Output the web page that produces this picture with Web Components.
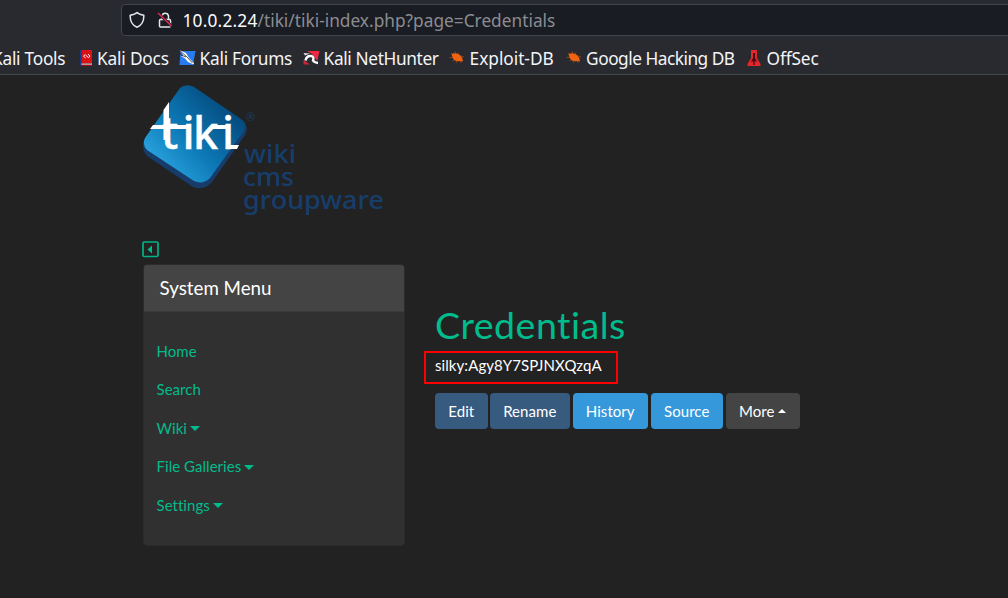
<!DOCTYPE html>
<html lang="en"><head><meta charset="utf-8"><title>Credentials</title>
<style>html,body{margin:0;height:100%;background:#222;overflow:hidden}</style></head><body>
<browser-view></browser-view>
<script>
const define=(name,html)=>customElements.define(name,class extends HTMLElement{
  constructor(){super();this.attachShadow({mode:'open'}).innerHTML=html;}
});

define('address-bar',`<style>
:host{display:flex;align-items:center;box-sizing:border-box;height:32px;margin:4px -10px 0 121px;padding-left:7px;background:#1a1c23;border:1px solid #43454b;border-radius:4px;color:#8b8c91;font:17.3px "Noto Sans",sans-serif;white-space:nowrap}
b{font-weight:400;color:#fbfbfe;letter-spacing:.2px}svg{flex:none;margin-right:12px}.lock{margin-right:9.500px}
span{display:block;line-height:30px;padding-top:1px}
</style>
<svg width="16" height="18" viewBox="0 0 16 18" fill="none" stroke="#e6e6ea" stroke-width="1.5" stroke-linejoin="round"><path d="M8 1.5 C6.5 3 4 3.7 1.2 4.2 C.9 10 3.4 14.2 8 16.3 C12.6 14.2 15.1 10 14.8 4.2 C12 3.7 9.500 3 8 1.5Z"/></svg>
<svg class="lock" width="16" height="18" viewBox="0 0 16 18" fill="none" stroke="#e6e6ea" stroke-width="1.5"><rect x="2.5" y="8.500" width="11" height="7.500" rx="1"/><path d="M5 8.500V5A3.300 3.300 0 0 1 11.500 5V8.500"/><path d="M1 2L14.500 15" stroke="#1a1c23" stroke-width="3"/><path d="M1 2L14.500 15" stroke="#e22850" stroke-width="1.500"/></svg>
<span><b>10.0.2.24</b>/tiki/tiki-index.php?page=Credentials</span>`);

define('bookmark-link',`<style>
:host{display:flex;flex:none;align-items:center;height:24px;color:#f4f4f7;font:17.3px/24px "Noto Sans",sans-serif;white-space:nowrap}
::slotted(svg){flex:none;margin:0 3.600px 1px 0}
</style><slot name="icon"></slot><slot></slot>`);

const bug=`<svg slot="icon" width="18" height="18" viewBox="0 0 18 18"><path d="M3 4L5 6M7 2.500L8 6M1.500 8.500H5M10 3.500L10.500 6M13 7L16 8M4.500 12L7 10.500M8 14L9 11.500M13 14L12 11" fill="none" stroke="#8a4020" stroke-width="1"/><path d="M3.500 5Q8 3 12 6Q14.500 8 15 12.500L12 12Q7 13 4.800 9Z" fill="#ef6410"/></svg>`;
define('bookmark-bar',`<style>
:host{display:flex;margin-top:10.500px;height:24px}
.tools{margin-left:-8px;width:85.500px;letter-spacing:-.25px}
.docs{width:100.500px;letter-spacing:-.2px}
.forums{width:124px;letter-spacing:-.27px}
.hunter{width:146px;letter-spacing:-.37px}
.exploit{width:116.500px;letter-spacing:-.03px}
.hacking{width:180.500px;letter-spacing:-.5px}
.offsec{letter-spacing:-.15px}
</style>
<bookmark-link class="tools">Kali Tools</bookmark-link>
<bookmark-link class="docs"><svg slot="icon" width="16" height="18" viewBox="0 0 16 18"><path d="M2 1H3.500V17H2Z" fill="#173b87"/><path d="M3.500 1H14V14.500H3.500Z" fill="#dc1115"/><path d="M3.500 14.500H14V16H3.500Z" fill="#c9ced3"/><path d="M3.500 15.700H14V17H3.500Z" fill="#a50d12"/><path d="M7 5.500L5.500 7.300L7.500 8.800M10 5.200L12 7L10.500 8.800M7.500 6L10.200 8.400" fill="none" stroke="#fff" stroke-width="1"/></svg>Kali Docs</bookmark-link>
<bookmark-link class="forums"><svg slot="icon" width="18" height="18" viewBox="0 0 18 18"><path d="M2.500 2H17.500L15 16H1.500Z" fill="#287cf0"/><path d="M1 1L8 4L11 9L16 14L15.500 15.500L10 13L7 9.500L3 7L5 5.500Z" fill="#fff"/><path d="M1 1L9 8L14.500 14M3 6L8 8M1 4L5 7" fill="none" stroke="#292a31" stroke-width=".8"/></svg>Kali Forums</bookmark-link>
<bookmark-link class="hunter"><svg slot="icon" width="18" height="18" viewBox="0 0 18 18"><path d="M5 2H17.500L15.300 12L10 5Z" fill="#ef2940"/><path d="M1.500 11L8 15.500H1.500Z" fill="#c9243a"/><path d="M3.500 11.500Q4.500 6.500 9 7Q12.500 7.500 11 11.500Q12.500 13.800 16 14" fill="none" stroke="#fff" stroke-width="2.400"/><path d="M1.500 4L8 4.500L3 6.500Z" fill="#ddd"/></svg>Kali NetHunter</bookmark-link>
<bookmark-link class="exploit">${bug}Exploit-DB</bookmark-link>
<bookmark-link class="hacking">${bug}Google Hacking DB</bookmark-link>
<bookmark-link class="offsec"><svg slot="icon" width="18" height="18" viewBox="0 0 18 18"><path d="M6 1H12V9L15.500 15V17H2.500V15L6 9Z" fill="#e3272c"/><path d="M8 4H10V9L12 13L9.500 12L6 13L8 9Z" fill="#4a080d"/><path d="M8.300 11H9.700V16H8.300Z" fill="#5c0c11"/></svg>OffSec</bookmark-link>`);

define('browser-chrome',`<style>:host{display:flex;flex-direction:column;box-sizing:border-box;height:75px;background:#292a30;border-bottom:1px solid #43464a;overflow:hidden}</style><address-bar></address-bar><bookmark-bar></bookmark-bar>`);

define('tiki-logo',`<style>:host{display:block;width:245px;height:133px}svg{display:block}</style>
<svg width="245" height="133" viewBox="143 84 245 133">
<defs><linearGradient id="g" x1="155" y1="165" x2="225" y2="100" gradientUnits="userSpaceOnUse"><stop stop-color="#2aa4df"/><stop offset=".45" stop-color="#0c78b5"/><stop offset="1" stop-color="#044a7d"/></linearGradient></defs>
<path d="M181 88Q187 84 194 87L243 121Q249 127 245 135L212 182Q204 191 193 187L147 156Q141 149 144 140Z" fill="#173c6a"/>
<path d="M180 88Q186 83 194 87L241 119Q248 124 243 132L210 178Q203 185 194 181L147 150Q142 145 145 138Z" fill="url(#g)"/>
<g fill="#fff" stroke="#fff"><text y="149" font-family="Noto Sans" font-weight="500" font-size="45" stroke-width=".4"><tspan x="161">t</tspan><tspan x="182.500">i</tspan><tspan x="193">k</tspan><tspan x="222">i</tspan></text>
<path d="M163.500 110L169 102V140H163.500ZM153 125H189V129H150ZM214 125H228V129H210ZM228 145H239L237 149H228Z" stroke="none"/></g>
<g fill="#173e6a" font-family="Noto Sans" font-weight="500" font-size="26"><text x="244" y="163" textLength="52" lengthAdjust="spacingAndGlyphs">wiki</text><text x="243" y="186" textLength="51" lengthAdjust="spacingAndGlyphs">cms</text><text x="243" y="209" textLength="141" lengthAdjust="spacingAndGlyphs">groupware</text></g>
<text x="246" y="121" font-family="Noto Sans" font-size="11" fill="#173e6a">®</text></svg>`);

define('menu-item',`<style>:host{display:flex;align-items:center;height:38.500px;color:#00bc8c;font:15px/22.500px Lato,sans-serif;font-variant-ligatures:none;letter-spacing:.04px}
i{display:none;margin:1px 0 0 3px;border:5px solid transparent;border-top-color:#00bc8c;border-bottom:0}
:host([dropdown]) i{display:block}</style><slot></slot><i></i>`);

define('menu-card',`<style>:host{display:block;box-sizing:border-box;width:262px;height:282px;background:#303030;border:1px solid #2b2b2b;border-radius:4px;overflow:hidden}
header{box-sizing:border-box;height:47px;background:#444;border-bottom:1px solid #3a3a3a;padding-left:15.500px;color:#fff;font:18.750px/46px Lato,sans-serif}
nav{padding:19.800px 12.500px}</style><header>System Menu</header><nav><slot></slot></nav>`);

define('tiki-button',`<style>:host{display:flex;align-items:center;justify-content:center;box-sizing:border-box;height:36px;padding-right:.5px;border-radius:4px;background:#375a7f;color:#fff;font:15px/22px Lato,sans-serif;font-variant-ligatures:none;letter-spacing:.05px}
:host([kind=info]){background:#3498db}:host([kind=more]){background:#444}
i{display:none;margin-left:4px;border:4.500px solid transparent;border-bottom-color:#fff;border-top:0}:host([kind=more]) i{display:block}</style><slot></slot><i></i>`);

define('credential-page',`<style>:host{display:block;padding-top:61px;color:#fff;font:15px/22.500px Lato,sans-serif}
h1{margin:0;color:#00bc8c;font:400 37.500px/45px Lato,sans-serif;font-variant-ligatures:none;letter-spacing:.5px}
.mark{box-sizing:border-box;width:194px;height:33px;margin:4px 0 9px -11px;border:2px solid #f00;padding:1px 9px;letter-spacing:.07px}
.actions{display:flex}</style>
<h1>Credentials</h1><div class="mark">silky:Agy8Y7SPJNXQzqA</div>
<div class="actions"><tiki-button style="width:53px;margin-right:2px">Edit</tiki-button><tiki-button style="width:80px;margin-right:3px">Rename</tiki-button><tiki-button kind="info" style="width:75px;margin-right:3px">History</tiki-button><tiki-button kind="info" style="width:72px;margin-right:3px">Source</tiki-button><tiki-button kind="more" style="width:74px">More</tiki-button></div>`);

define('browser-view',`<style>:host{display:flex;flex-direction:column;height:598px;background:#222}
main{flex:1;padding:9px 0 0 143px}
.columns{display:grid;grid-template-columns:292px 1fr;margin-top:24px}
.toggle{display:block;margin:0 0 6px -1px}</style>
<browser-chrome></browser-chrome><main><tiki-logo></tiki-logo>
<div class="columns"><aside><svg class="toggle" width="17" height="17" viewBox="0 0 17 17"><rect x="1" y="1" width="15" height="14.500" rx="1.200" fill="none" stroke="#00b386" stroke-width="1.700"/><path d="M10 4.500V12.500L5.500 8.500Z" fill="#00bc8c"/></svg>
<menu-card><menu-item>Home</menu-item><menu-item>Search</menu-item><menu-item dropdown>Wiki</menu-item><menu-item dropdown>File Galleries</menu-item><menu-item dropdown>Settings</menu-item></menu-card></aside><credential-page></credential-page></div></main>`);
</script></body></html>
